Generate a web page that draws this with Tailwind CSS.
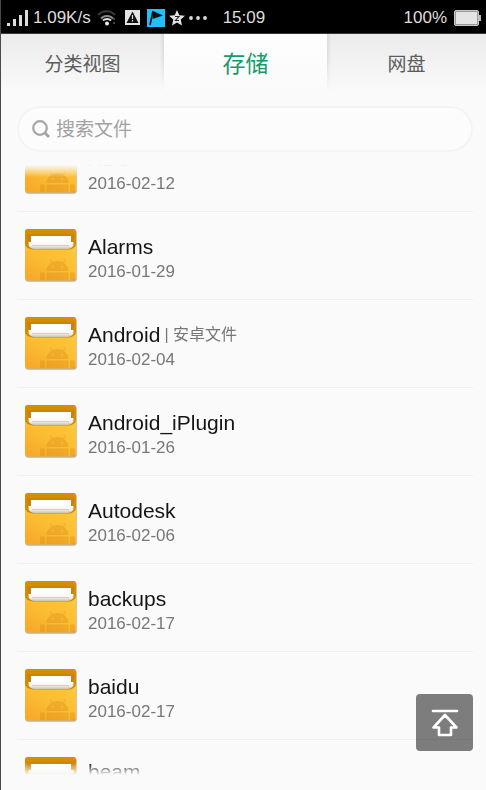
<!DOCTYPE html>
<html lang="zh-CN">
<head>
<meta charset="utf-8">
<meta name="viewport" content="width=device-width, initial-scale=1">
<title>文件管理</title>
<script src="https://cdn.jsdelivr.net/npm/@tailwindcss/browser@4"></script>
</head>
<body class="bg-[#fafafa] font-['Liberation_Sans','Noto_Sans_CJK_SC',sans-serif]">
<svg class="absolute h-0 w-0" aria-hidden="true">
  <defs>
    <linearGradient id="body" x1="0.7" y1="0.2" x2="0.2" y2="1.1">
      <stop offset="0" stop-color="#fdc83d"/><stop offset="0.5" stop-color="#fbbc33"/><stop offset="1" stop-color="#f8a626"/>
    </linearGradient>
    <linearGradient id="paper" x1="0" y1="0" x2="0" y2="1">
      <stop offset="0" stop-color="#fff"/><stop offset="0.55" stop-color="#f6f4ef"/><stop offset="1" stop-color="#c9c0a8"/>
    </linearGradient>
    <symbol id="folder" viewBox="0 0 54 56">
      <rect x="1" y="2" width="52" height="52" rx="3" fill="#8a8a8a" opacity=".25"/>
      <rect x="1.5" y="1.5" width="51" height="52" rx="3" fill="#c98a2a" opacity=".6"/>
      <rect x="1" y="1" width="51" height="51" rx="3" fill="url(#body)"/>
      <path d="M1 17V4a3 3 0 0 1 3-3h45a3 3 0 0 1 3 3v13c-1 2-3 4-6 4.500H8c-4-.5-6-2.500-7-4.500z" fill="#d48d05"/>
      <path d="M3 6v10l2 4h43l2-4V6" fill="#bd7d08" opacity=".5"/>
      <rect x="7" y="8" width="40" height="9" fill="#fff"/>
      <path d="M4.500 14h2.500v-1h40v1h2.500v2c0 3.500-3 5-7 5h-31c-4 0-7-1.500-7-5z" fill="url(#paper)"/>
      <path d="M8 17.500h37" stroke="#d8d1c0" stroke-width="1"/>
      <g fill="#d88913" opacity=".34">
        <path d="M22.500 43a11 10 0 0 1 22 0z"/>
        <path d="M22.500 44.500h22V52h-22zM16 46.500a2.500 2.500 0 0 1 5 0V52h-5zM46 46.500a2.500 2.500 0 0 1 5 0V52h-5z"/>
        <path d="M26 32l3 4M41 32l-3 4" stroke="#d88913" stroke-width="1.200" stroke-linecap="round"/>
      </g>
      <circle cx="29" cy="39" r="1" fill="#fbbd38"/><circle cx="38" cy="39" r="1" fill="#fbbd38"/>
    </symbol>
  </defs>
</svg>
<div class="relative flex h-screen flex-col overflow-hidden border-l border-[#4a4a4c]">
  <header class="flex h-[34px] shrink-0 items-center border-b border-[#3a383a] bg-black pt-0.5 pr-[5px] pl-1.5 text-[17px] leading-6 text-[#dedede]">
    <svg class="h-[18px] w-[21px]" viewBox="0 0 21 18" fill="#dcdcdc" aria-label="信号"><path d="M0 14h3v3H0zM6 10h3v7H6zM12 6h3v11h-3zM18 1h3v16h-3z"/></svg>
    <span class="ml-[5px]">1.09K/s</span>
    <svg class="ml-1.5 h-[18px] w-5" viewBox="0 0 20 18" fill="none" stroke-width="2" aria-label="无线网络">
      <path d="M1 6c5-5 12-5 17 0" stroke="#383838"/><path d="M4 9.500c3-3.500 9-3.500 12 0" stroke="#8a8a8a"/><path d="M6 11.500c2-2 6-2 8 0" stroke="#ddd"/><circle cx="10" cy="14.500" r="2" fill="#eee"/><path d="M17 9v2M17 13v2" stroke="#444"/>
    </svg>
    <svg class="ml-2 h-[15px] w-[15px]" viewBox="0 0 15 15" aria-label="警告"><path d="M0 0h15v15H0z" fill="#e4e4e4"/><path d="M7.500 1.500 13.500 13h-12z" fill="#111"/><path d="M7.500 5v4M7.500 10v1.500" stroke="#ddd" stroke-width="1.200"/></svg>
    <svg class="ml-[7px] h-[18px] w-[18px]" viewBox="0 0 18 18" aria-label="旗标"><path d="M0 0h18v18H0z" fill="#20c0fb"/><path d="M6 2 16 6.500 5.500 10z" fill="#111"/><path d="M6 2 3 16" stroke="#111" stroke-width="1.600"/></svg>
    <svg class="ml-1 h-4 w-4" viewBox="0 0 16 16" aria-label="收藏"><path d="m8 0 2.300 5.200 5.700.6-4.300 3.800L13 15.500 8 12.500l-5 3 1.300-5.900L0 5.800l5.700-.6z" fill="#e5e5e5"/><path d="M6 6.500h4l-3.500 4H10" fill="none" stroke="#222" stroke-width="1.100"/></svg>
    <svg class="ml-1 h-1 w-[18px]" viewBox="0 0 18 4" fill="#ddd" aria-label="更多"><circle cx="2" cy="2" r="1.900"/><circle cx="9" cy="2" r="1.900"/><circle cx="16" cy="2" r="1.900"/></svg>
    <time class="ml-4">15:09</time>
    <span class="ml-auto">100%</span>
    <svg class="ml-[7px] h-4 w-[27px]" viewBox="0 0 27 16" aria-label="电量"><rect x=".5" y=".5" width="24" height="15" rx="1.500" fill="#999" stroke="#c8c8c8"/><rect x="2" y="2" width="21" height="12" fill="#e4e4e4"/><path d="M25 5h2v6h-2z" fill="#bbb"/></svg>
  </header>

  <nav class="grid h-[58px] shrink-0 grid-cols-[163fr_163fr_159fr] text-[19px] text-[#5c5c5c]">
    <a href="#category" class="flex items-center justify-center bg-linear-to-b from-[#ebebeb] to-[#fafafa] pt-1">分类视图</a>
    <a href="#storage" aria-current="page" class="relative flex items-center justify-center bg-linear-to-b from-[#fefefe] to-[#fafafa] pt-0.5 text-[23px] text-[#159a6a]">
      <span class="absolute inset-y-0 -left-1 w-1 bg-linear-to-r from-transparent to-black/8 mask-b-from-40%"></span>
      存储
      <span class="absolute inset-y-0 -right-1 w-1 bg-linear-to-l from-transparent to-black/8 mask-b-from-40%"></span>
    </a>
    <a href="#cloud" class="flex items-center justify-center bg-linear-to-b from-[#ebebeb] to-[#fafafa] pt-1">网盘</a>
  </nav>

  <label class="mt-3.5 mr-[13px] ml-4 flex h-[46px] shrink-0 items-center rounded-full border-2 border-[#f4f4f4] bg-[#fcfcfc] pl-[13px]">
    <svg class="h-[18px] w-[18px] shrink-0" viewBox="0 0 18 18" fill="none" stroke="#a4a6a6" stroke-width="2.200" aria-hidden="true"><circle cx="8" cy="8" r="6.800"/><path d="m13 13 4 4" stroke-width="2.800"/></svg>
    <input type="text" placeholder="搜索文件" aria-label="搜索文件" class="ml-1.5 min-w-0 flex-1 bg-transparent pt-0.5 text-[19px] text-[#444] outline-none placeholder:text-[#a2a2a2]">
  </label>

  <main class="mt-[13px] mb-[15px] min-h-0 flex-1 overflow-hidden pr-[13px] pl-4 mask-t-from-[calc(100%-12px)] mask-b-from-[calc(100%-12px)]">
    <ul class="-mt-[41px]">
      <li class="flex h-[88px] items-center border-b border-[#efefef] pl-[7px]">
        <svg class="h-14 w-[54px]" aria-hidden="true"><use href="#folder"/></svg>
        <div class="ml-2.5 pt-1"><p class="text-[21px] leading-7 text-[#151515]">ADC</p><p class="text-[17px] leading-[22px] text-[#777]">2016-02-12</p></div>
      </li>
      <li class="flex h-[88px] items-center border-b border-[#efefef] pl-[7px]">
        <svg class="h-14 w-[54px]" aria-hidden="true"><use href="#folder"/></svg>
        <div class="ml-2.5 pt-1"><p class="text-[21px] leading-7 text-[#151515]">Alarms</p><p class="text-[17px] leading-[22px] text-[#777]">2016-01-29</p></div>
      </li>
      <li class="flex h-[88px] items-center border-b border-[#efefef] pl-[7px]">
        <svg class="h-14 w-[54px]" aria-hidden="true"><use href="#folder"/></svg>
        <div class="ml-2.5 pt-1">
          <p class="flex items-center text-[21px] leading-7 text-[#151515]">Android<span class="ml-1 text-base leading-7 text-[#777]">| 安卓文件</span></p>
          <p class="text-[17px] leading-[22px] text-[#777]">2016-02-04</p>
        </div>
      </li>
      <li class="flex h-[88px] items-center border-b border-[#efefef] pl-[7px]">
        <svg class="h-14 w-[54px]" aria-hidden="true"><use href="#folder"/></svg>
        <div class="ml-2.5 pt-1"><p class="text-[21px] leading-7 text-[#151515]">Android_iPlugin</p><p class="text-[17px] leading-[22px] text-[#777]">2016-01-26</p></div>
      </li>
      <li class="flex h-[88px] items-center border-b border-[#efefef] pl-[7px]">
        <svg class="h-14 w-[54px]" aria-hidden="true"><use href="#folder"/></svg>
        <div class="ml-2.5 pt-1"><p class="text-[21px] leading-7 text-[#151515]">Autodesk</p><p class="text-[17px] leading-[22px] text-[#777]">2016-02-06</p></div>
      </li>
      <li class="flex h-[88px] items-center border-b border-[#efefef] pl-[7px]">
        <svg class="h-14 w-[54px]" aria-hidden="true"><use href="#folder"/></svg>
        <div class="ml-2.5 pt-1"><p class="text-[21px] leading-7 text-[#151515]">backups</p><p class="text-[17px] leading-[22px] text-[#777]">2016-02-17</p></div>
      </li>
      <li class="flex h-[88px] items-center border-b border-[#efefef] pl-[7px]">
        <svg class="h-14 w-[54px]" aria-hidden="true"><use href="#folder"/></svg>
        <div class="ml-2.5 pt-1"><p class="text-[21px] leading-7 text-[#151515]">baidu</p><p class="text-[17px] leading-[22px] text-[#777]">2016-02-17</p></div>
      </li>
      <li class="flex h-[88px] items-start pt-4 pl-[7px]">
        <svg class="h-14 w-[54px]" aria-hidden="true"><use href="#folder"/></svg>
        <div class="ml-2.5 pt-0.5"><p class="text-[21px] leading-7 text-[#151515]">beam</p></div>
      </li>
    </ul>
  </main>

  <button type="button" aria-label="回到顶部" class="absolute right-[13px] bottom-[39px] flex h-[57px] w-[57px] items-center justify-center rounded-sm bg-black/50">
    <svg class="h-7 w-7" viewBox="0 0 28 28" fill="none" stroke="#fff" stroke-width="2.600" stroke-linejoin="round" stroke-linecap="round" aria-hidden="true"><path d="M2 2h24"/><path d="M14 6 2.500 18.500H8V26h12v-7.500h5.500z"/></svg>
  </button>
</div>
</body>
</html>
